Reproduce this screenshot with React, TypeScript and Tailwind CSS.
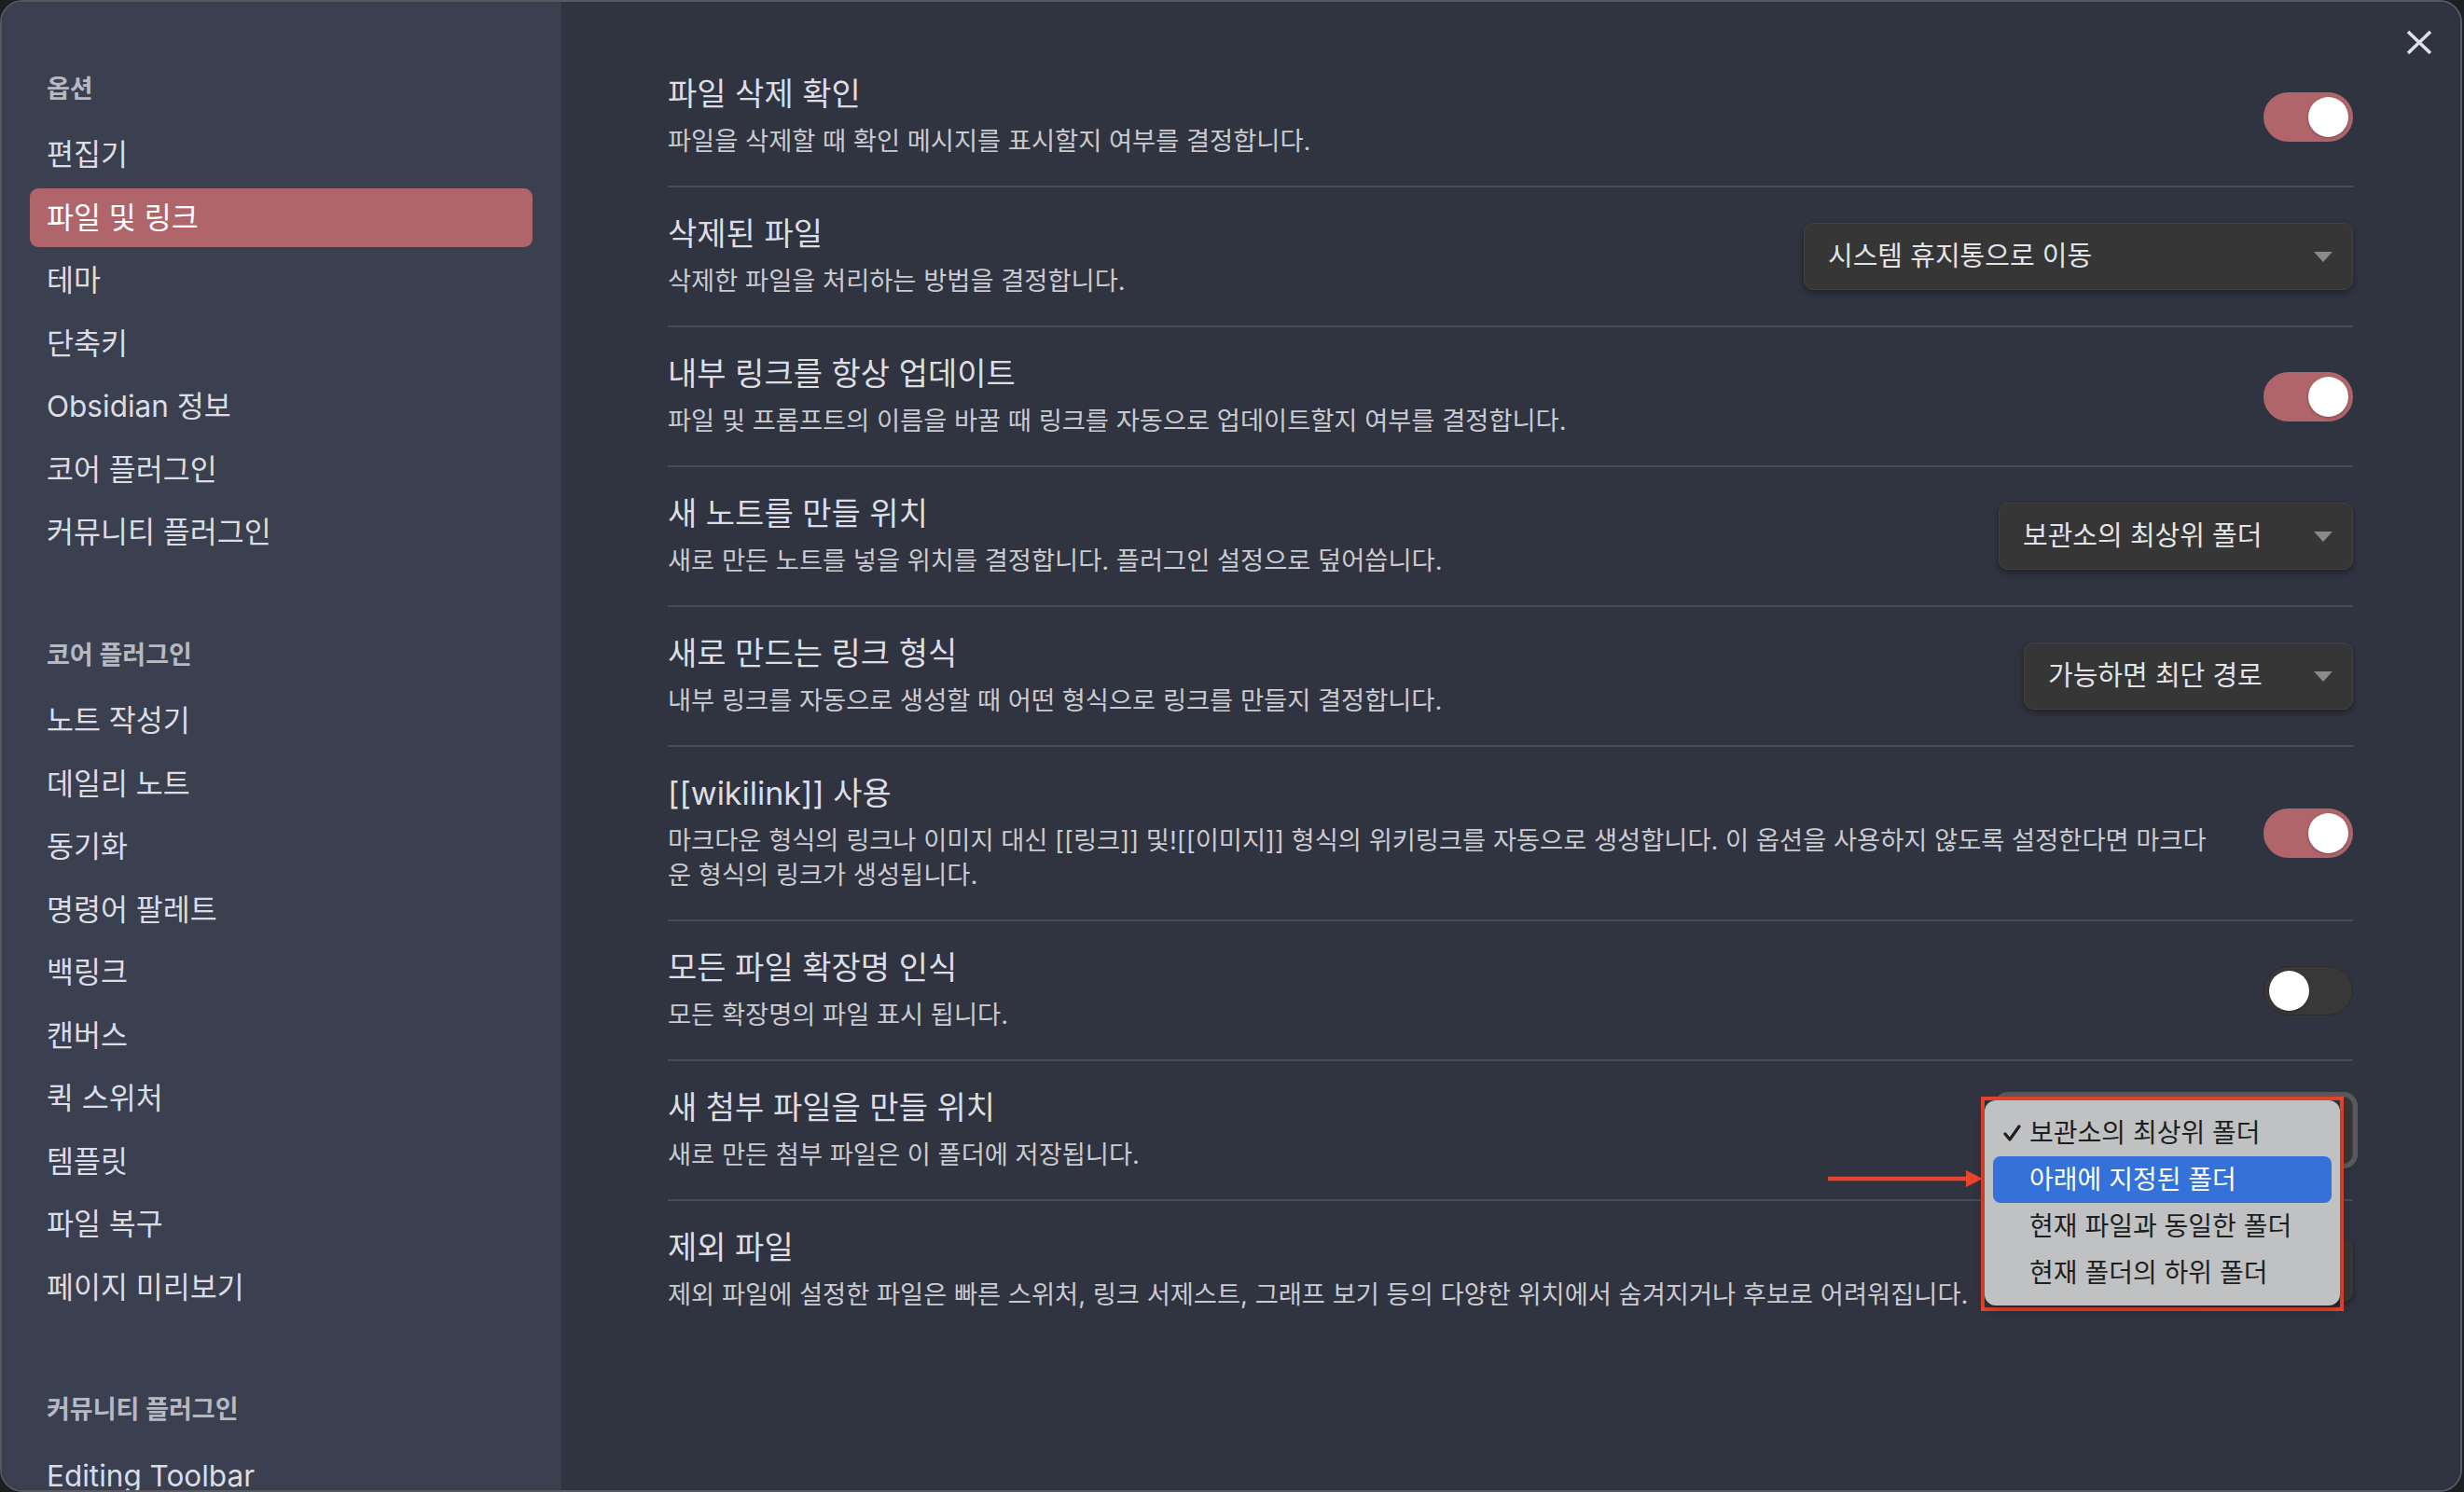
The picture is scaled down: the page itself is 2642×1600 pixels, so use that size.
import React from 'react';

type Group = { title: string; items: string[] };

const groups: Group[] = [
  {
    title: '옵션',
    items: ['편집기', '파일 및 링크', '테마', '단축키', 'Obsidian 정보', '코어 플러그인', '커뮤니티 플러그인'],
  },
  {
    title: '코어 플러그인',
    items: ['노트 작성기', '데일리 노트', '동기화', '명령어 팔레트', '백링크', '캔버스', '퀵 스위처', '템플릿', '파일 복구', '페이지 미리보기'],
  },
  { title: '커뮤니티 플러그인', items: ['Editing Toolbar'] },
];

function Sidebar() {
  return (
    <div className="w-[599px] shrink-0 bg-[#3b4051] pt-[70px] px-[30px] overflow-hidden">
      {groups.map((g, gi) => (
        <div key={g.title} className={gi === 0 ? 'flex flex-col gap-[4.5px]' : 'flex flex-col gap-[4.5px] mt-[76.5px]'}>
          <div className="h-[48px] mb-[10px] flex items-center pl-[18px] text-[27px] font-semibold text-[#b6b9c2]">
            {g.title}
          </div>
          {g.items.map((item) => (
            <div
              key={item}
              className={
                item === '파일 및 링크'
                  ? 'h-[63px] shrink-0 rounded-[9px] pl-[18px] flex items-center text-[31.5px] bg-[#b0656a] text-white'
                  : 'h-[63px] shrink-0 rounded-[9px] pl-[18px] flex items-center text-[31.5px] text-[#dcdde2]'
              }
            >
              {item}
            </div>
          ))}
        </div>
      ))}
    </div>
  );
}

function Toggle({ on }: { on: boolean }) {
  if (on) {
    return (
      <div className="w-[96px] h-[53px] rounded-full bg-[#b0656a] flex items-center justify-end pr-[5px]">
        <div className="w-[43px] h-[43px] rounded-full bg-white shadow-[0_1px_3px_rgba(0,0,0,0.3)]" />
      </div>
    );
  }
  return (
    <div className="w-[96px] h-[53px] rounded-full bg-[#383838] border border-[#2c2c2c] flex items-center justify-start pl-[5px]">
      <div className="w-[43px] h-[43px] rounded-full bg-white shadow-[0_1px_3px_rgba(0,0,0,0.3)]" />
    </div>
  );
}

function Caret() {
  return (
    <svg width="20" height="11" viewBox="0 0 20 11" className="shrink-0">
      <path d="M0 0h20L10 11z" fill="#8a8a8a" />
    </svg>
  );
}

function Select({ value, className }: { value?: string; className: string }) {
  return (
    <div
      className={
        'h-[72px] rounded-[10px] bg-[#363636] border border-[#414141] shadow-[0_3px_6px_rgba(0,0,0,0.35)] flex items-center justify-between pl-[25px] pr-[21px] text-[29px] text-[#e4e4e6] ' +
        className
      }
    >
      <span className="whitespace-nowrap">{value}</span>
      <Caret />
    </div>
  );
}

function Row({
  title,
  desc,
  control,
  last,
}: {
  title: string;
  desc: React.ReactNode;
  control: React.ReactNode;
  last?: boolean;
}) {
  return (
    <div
      className={
        last
          ? 'flex items-center gap-[36px] pt-[29px] pb-[29px]'
          : 'flex items-center gap-[36px] pt-[29px] pb-[29px] border-b-2 border-[#454b5c]'
      }
    >
      <div className="flex-1 min-w-0">
        <div className="text-[34px] leading-[42px] text-[#dcdee3]">{title}</div>
        <div className="mt-[11px] text-[27.3px] leading-[37px] text-[#c9cbd1]">{desc}</div>
      </div>
      <div className="shrink-0">{control}</div>
    </div>
  );
}

function PopupMenu() {
  const items = ['보관소의 최상위 폴더', '아래에 지정된 폴더', '현재 파일과 동일한 폴더', '현재 폴더의 하위 폴더'];
  return (
    <div className="absolute left-[2124px] top-[1176px] w-[389px] h-[230px] border-4 border-[#e9442b]">
      <div className="w-[381px] h-[220px] rounded-[12px] bg-[#c0c1c3] py-[10px] px-[9px] flex flex-col shadow-[0_4px_12px_rgba(0,0,0,0.3)]">
        {items.map((it, i) => (
          <div
            key={it}
            className={
              i === 1
                ? 'relative h-[50px] rounded-[8px] flex items-center pl-[39px] text-[28px] bg-[#3471d8] text-white'
                : 'relative h-[50px] rounded-[8px] flex items-center pl-[39px] text-[28px] text-[#1f1f1f]'
            }
          >
            {i === 0 && (
              <svg width="19" height="18" viewBox="0 0 19 18" className="absolute left-[11px] top-[16px]">
                <path d="M2 10l5 6L17 2" fill="none" stroke="#1f1f1f" strokeWidth="3.2" strokeLinecap="round" strokeLinejoin="round" />
              </svg>
            )}
            {it}
          </div>
        ))}
      </div>
    </div>
  );
}

export default function App() {
  return (
    <div className="relative w-[2642px] h-[1600px] bg-[#1d1e23] overflow-hidden font-[Inter,'Noto_Sans_CJK_KR',sans-serif]">
      <div className="w-[2640px] h-[1600px] flex border-2 border-[#58595e] rounded-[24px] overflow-hidden">
        <Sidebar />
        <div className="flex-1 min-w-0 bg-[#303340] border-l border-[#363a48] pt-[49px] pl-[114px] pr-[115px]">
          <Row
            title="파일 삭제 확인"
            desc="파일을 삭제할 때 확인 메시지를 표시할지 여부를 결정합니다."
            control={<Toggle on />}
          />
          <Row
            title="삭제된 파일"
            desc="삭제한 파일을 처리하는 방법을 결정합니다."
            control={<Select value="시스템 휴지통으로 이동" className="w-[589px]" />}
          />
          <Row
            title="내부 링크를 항상 업데이트"
            desc="파일 및 프롬프트의 이름을 바꿀 때 링크를 자동으로 업데이트할지 여부를 결정합니다."
            control={<Toggle on />}
          />
          <Row
            title="새 노트를 만들 위치"
            desc="새로 만든 노트를 넣을 위치를 결정합니다. 플러그인 설정으로 덮어씁니다."
            control={<Select value="보관소의 최상위 폴더" className="w-[380px]" />}
          />
          <Row
            title="새로 만드는 링크 형식"
            desc="내부 링크를 자동으로 생성할 때 어떤 형식으로 링크를 만들지 결정합니다."
            control={<Select value="가능하면 최단 경로" className="w-[353px]" />}
          />
          <Row
            title="[[wikilink]] 사용"
            desc={
              <>
                마크다운 형식의 링크나 이미지 대신 [[링크]] 및![[이미지]] 형식의 위키링크를 자동으로 생성합니다. 이 옵션을 사용하지 않도록 설정한다면 마크다
                <br />
                운 형식의 링크가 생성됩니다.
              </>
            }
            control={<Toggle on />}
          />
          <Row title="모든 파일 확장명 인식" desc="모든 확장명의 파일 표시 됩니다." control={<Toggle on={false} />} />
          <Row
            title="새 첨부 파일을 만들 위치"
            desc="새로 만든 첨부 파일은 이 폴더에 저장됩니다."
            control={<Select className="w-[380px] ring-[5px] ring-[#59595b]" />}
          />
          <Row
            last
            title="제외 파일"
            desc="제외 파일에 설정한 파일은 빠른 스위처, 링크 서제스트, 그래프 보기 등의 다양한 위치에서 숨겨지거나 후보로 어려워집니다."
            control={<div className="h-[68px] w-[160px] rounded-[10px] bg-[#363636] shadow-[0_3px_6px_rgba(0,0,0,0.35)]" />}
          />
        </div>
      </div>

      <svg width="28" height="27" viewBox="0 0 28 27" className="absolute left-[2580px] top-[32px]">
        <path d="M2 2l24 23M26 2L2 25" stroke="#e0e1e6" strokeWidth="3.6" />
      </svg>

      <svg width="170" height="24" viewBox="0 0 170 24" className="absolute left-[1958px] top-[1252px]">
        <path d="M2 12h150" stroke="#e9442b" strokeWidth="4.5" />
        <path d="M150 3L168 12L150 21z" fill="#e9442b" />
      </svg>

      <PopupMenu />
    </div>
  );
}
